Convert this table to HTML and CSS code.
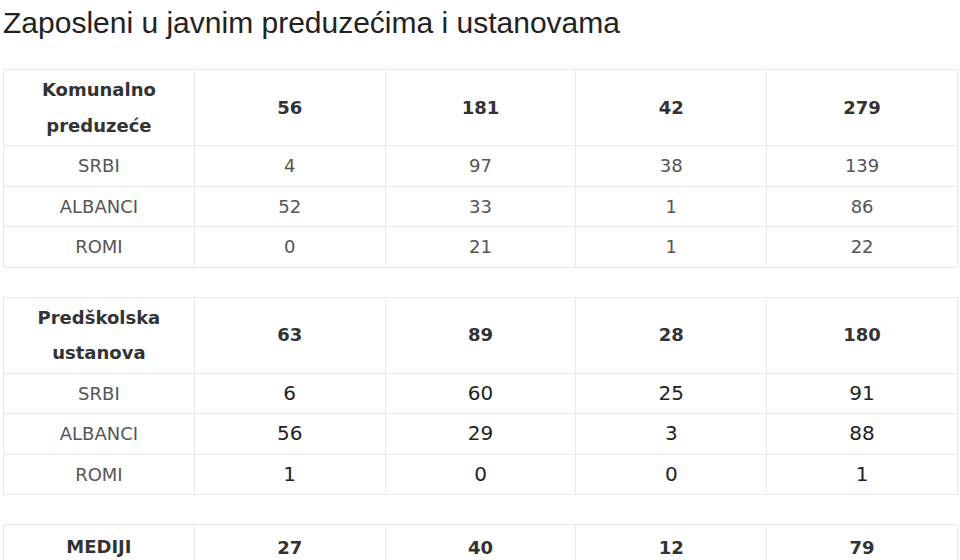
FILE: index.html
```html
<!DOCTYPE html>
<html lang="sr">
<head>
<meta charset="utf-8">
<title>Zaposleni u javnim preduzećima i ustanovama</title>
<link rel="stylesheet" href="styles.css">
</head>
<body>
<div class="page">
  <h1 class="title">Zaposleni u javnim preduzećima i ustanovama</h1>

  <table class="stats">
    <tr class="head"><th>Komunalno preduzeće</th><th>56</th><th>181</th><th>42</th><th>279</th></tr>
    <tr><td>SRBI</td><td>4</td><td>97</td><td>38</td><td>139</td></tr>
    <tr><td>ALBANCI</td><td>52</td><td>33</td><td>1</td><td>86</td></tr>
    <tr><td>ROMI</td><td>0</td><td>21</td><td>1</td><td>22</td></tr>
  </table>

  <table class="stats big">
    <tr class="head"><th>Predškolska ustanova</th><th>63</th><th>89</th><th>28</th><th>180</th></tr>
    <tr><td>SRBI</td><td class="n">6</td><td class="n">60</td><td class="n">25</td><td class="n">91</td></tr>
    <tr><td>ALBANCI</td><td class="n">56</td><td class="n">29</td><td class="n">3</td><td class="n">88</td></tr>
    <tr><td>ROMI</td><td class="n">1</td><td class="n">0</td><td class="n">0</td><td class="n">1</td></tr>
  </table>

  <table class="stats last">
    <tr class="head"><th>MEDIJI</th><th>27</th><th>40</th><th>12</th><th>79</th></tr>
  </table>
</div>
</body>
</html>
```

FILE: styles.css
```css
html, body {
  margin: 0;
  padding: 0;
  background: #ffffff;
}

.page {
  padding: 6px 0 0 3px;
}

.title {
  margin: 0 0 29px 0;
  font-family: "Liberation Sans", Arial, sans-serif;
  font-weight: normal;
  font-size: 30px;
  line-height: 34px;
  color: #222222;
}

.stats {
  width: 955px;
  table-layout: fixed;
  border-collapse: collapse;
  margin-bottom: 29px;
  font-family: "DejaVu Sans", Verdana, sans-serif;
  font-size: 18px;
  line-height: 35.5px;
  color: #555555;
}

.stats th,
.stats td {
  border: 1px solid #e9e9e9;
  padding: 2px 10px;
  text-align: center;
  vertical-align: middle;
}

.stats th {
  font-weight: bold;
  color: #333333;
}

.stats .head th:first-child {
  padding: 2px 28px;
}

.last .head th {
  padding-top: 5px;
}

.big .n {
  font-size: 20px;
  color: #222222;
}
```
